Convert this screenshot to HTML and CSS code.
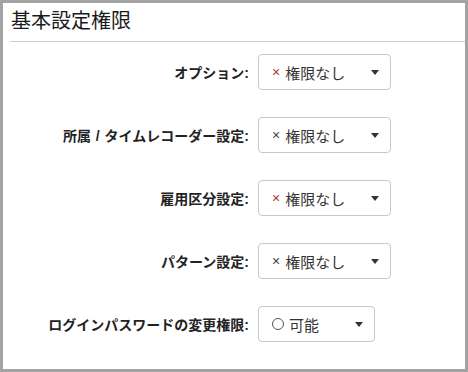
FILE: index.html
```html
<!DOCTYPE html>
<html lang="ja">
<head>
<meta charset="utf-8">
<link rel="stylesheet" href="styles.css">
</head>
<body>
<div class="frame">
  <div class="header"><h1 class="title">基本設定権限</h1></div>
  <div class="form">
    <div class="label">オプション:</div>
    <div class="select wide"><span class="x red">×</span><span class="val">権限なし</span><span class="caret"></span></div>

    <div class="label">所属 / タイムレコーダー設定:</div>
    <div class="select wide"><span class="x">×</span><span class="val">権限なし</span><span class="caret"></span></div>

    <div class="label">雇用区分設定:</div>
    <div class="select wide"><span class="x red">×</span><span class="val">権限なし</span><span class="caret"></span></div>

    <div class="label">パターン設定:</div>
    <div class="select wide"><span class="x">×</span><span class="val">権限なし</span><span class="caret"></span></div>

    <div class="label">ログインパスワードの変更権限:</div>
    <div class="select narrow"><span class="circle"></span><span class="val">可能</span><span class="caret"></span></div>
  </div>
</div>
</body>
</html>
```

FILE: styles.css
```css
html, body {
  margin: 0;
  padding: 0;
  background: #fff;
}
body {
  font-family: "Liberation Sans", "Noto Sans CJK JP", sans-serif;
  color: #222;
}
.frame {
  box-sizing: border-box;
  width: 468px;
  height: 372px;
  border: 3px solid #a3a3a3;
  background: #fff;
}
.header {
  margin-left: 7px;
  padding: 4px 0 6px 1px;
  border-bottom: 1px solid #cfcfcf;
}
.title {
  margin: 0;
  font-size: 20px;
  line-height: 28px;
  font-weight: normal;
  color: #1a1a1a;
}
.form {
  display: grid;
  grid-template-columns: 246px auto;
  column-gap: 9px;
  row-gap: 27px;
  margin-top: 12px;
  align-items: center;
  justify-items: start;
}
.label {
  justify-self: end;
  font-size: 14px;
  font-weight: bold;
  color: #222;
  white-space: nowrap;
  word-spacing: 1px;
}
.select {
  box-sizing: border-box;
  height: 36px;
  border: 1px solid #c8c8c8;
  border-radius: 4px;
  display: flex;
  align-items: center;
  padding: 0 11px 0 13px;
  font-size: 14px;
  color: #333;
}
.wide { width: 133px; }
.narrow { width: 117px; }
.x {
  font-size: 14px;
  color: #444;
  margin-right: 5px;
}
.x.red { color: #a33a3a; }
.circle {
  box-sizing: border-box;
  width: 12px;
  height: 12px;
  border: 1px solid #555;
  border-radius: 50%;
  margin: 0 5px 0 0;
}
.val {
  font-size: 15px;
  color: #333;
}
.caret {
  margin-left: auto;
  width: 0;
  height: 0;
  border-left: 4px solid transparent;
  border-right: 4px solid transparent;
  border-top: 5px solid #333;
}
```
